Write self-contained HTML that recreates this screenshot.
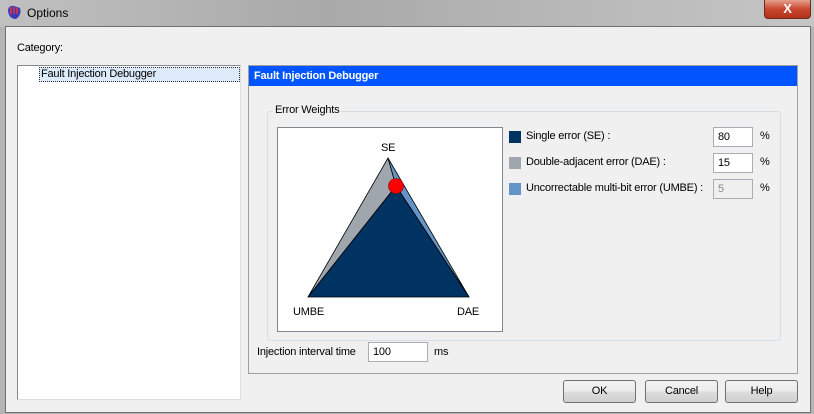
<!DOCTYPE html><html><head><style>
body{margin:0;width:814px;height:414px;overflow:hidden;font-family:"Liberation Sans",sans-serif;font-size:11px;letter-spacing:-0.2px;background:#b4b4b4;position:relative}
.a{position:absolute;white-space:nowrap}
.inp{position:absolute;background:#fff;border:1px solid #abadb3;height:20px;box-sizing:border-box;padding:3px 4px;font-size:11px}
.btn{position:absolute;top:380px;height:23px;width:73px;box-sizing:border-box;border:1px solid #707070;border-radius:3px;background:linear-gradient(#f2f2f2,#ebebeb 50%,#dddddd 51%,#cfcfcf);text-align:center;line-height:21px}
</style></head><body>
<div class="a" style="left:0;top:0;width:814px;height:27px;background:linear-gradient(90deg,#c0c0c0,#a9a9a9 40%,#b8b8b8 70%,#c5c5c5)"></div>
<svg class="a" style="left:5px;top:3px" width="18" height="18"><path d="M3 8 Q3 2 9 3 L15 5 Q17 12 11 16 Q4 16 3 8Z" fill="#3b3bb8"/><path d="M6 4 V11 M9 4 V11 M12 5 V11" stroke="#e33" stroke-width="1.5"/></svg>
<div class="a" style="left:27px;top:6px;font-size:12px;color:#000;letter-spacing:0">Options</div>
<div class="a" style="left:764px;top:0;width:45px;height:18px;border:1px solid #6d2b20;border-top:none;border-radius:0 0 4px 4px;background:linear-gradient(#e8a08f,#c8472e 50%,#b5301b);color:#fff;font-weight:bold;text-align:center;font-size:13px;line-height:17px">X</div>
<div class="a" style="left:5px;top:26px;width:804px;height:385px;background:#f0f0f0;border:1px solid #707070"></div>
<div class="a" style="left:17px;top:42px">Category:</div>
<div class="a" style="left:17px;top:65px;width:222px;height:333px;background:#fff;border:1px solid #828790;border-right-color:#ddd;border-bottom-color:#ddd"></div>
<div class="a" style="left:39px;top:67px;width:198px;height:13px;background:#dceaf9;border:1px dotted #333;line-height:13px;padding-left:1px">Fault Injection Debugger</div>
<div class="a" style="left:248px;top:65px;width:548px;height:307px;border:1px solid #a0a0a0"></div>
<div class="a" style="left:249px;top:66px;width:548px;height:20px;background:#0055ff;color:#fff;font-weight:bold;line-height:20px;padding-left:5px;box-sizing:border-box">Fault Injection Debugger</div>
<div class="a" style="left:267px;top:111px;width:512px;height:228px;border:1px solid #d5dfe5;border-radius:3px"></div>
<div class="a" style="left:273px;top:104px;background:#f0f0f0;padding:0 2px">Error Weights</div>
<div class="a" style="left:277px;top:127px;width:224px;height:203px;background:#fff;border:1px solid #828790"></div>
<svg class="a" style="left:0;top:0" width="814" height="414">
<polygon points="388,158 308,297 396,186" fill="#a0a6ae" stroke="#000" stroke-width="0.8"/>
<polygon points="388,158 396,186 469,297" fill="#6495c8" stroke="#000" stroke-width="0.8"/>
<polygon points="396,186 308,297 469,297" fill="#003262" stroke="#000" stroke-width="0.8"/>
<circle cx="396" cy="186" r="7.5" fill="#ff0000" stroke="#800" stroke-width="0.6"/>
</svg>
<div class="a" style="left:381px;top:142px">SE</div>
<div class="a" style="left:293px;top:306px">UMBE</div>
<div class="a" style="left:457px;top:306px">DAE</div>
<div class="a" style="left:509px;top:131px;width:12px;height:12px;background:#003262"></div>
<div class="a" style="left:509px;top:157px;width:12px;height:12px;background:#a0a6ae"></div>
<div class="a" style="left:509px;top:183px;width:12px;height:12px;background:#6495c8"></div>
<div class="a" style="left:526px;top:130px">Single error (SE) :</div>
<div class="a" style="left:526px;top:156px">Double-adjacent error (DAE) :</div>
<div class="a" style="left:526px;top:182px">Uncorrectable multi-bit error (UMBE) :</div>
<div class="inp" style="left:713px;top:127px;width:40px">80</div>
<div class="inp" style="left:713px;top:153px;width:40px">15</div>
<div class="inp" style="left:713px;top:179px;width:40px;background:#f0f0f0;color:#888">5</div>
<div class="a" style="left:760px;top:130px">%</div>
<div class="a" style="left:760px;top:156px">%</div>
<div class="a" style="left:760px;top:182px">%</div>
<div class="a" style="left:257px;top:346px">Injection interval time</div>
<div class="inp" style="left:368px;top:342px;width:60px">100</div>
<div class="a" style="left:434px;top:346px">ms</div>
<div class="btn" style="left:563px">OK</div>
<div class="btn" style="left:645px">Cancel</div>
<div class="btn" style="left:725px">Help</div>
</body></html>
